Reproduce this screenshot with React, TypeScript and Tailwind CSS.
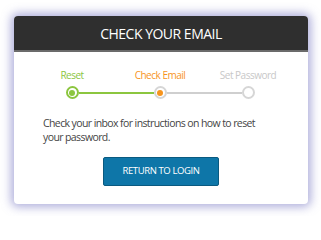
const steps = [
  { label: "Reset", text: "text-[#8cc63f]", ring: "border-[#8cc63f]", dot: "bg-[#8cc63f]", left: "bg-transparent", right: "bg-[#8cc63f]" },
  { label: "Check Email", text: "text-[#f7941d]", ring: "border-[#d6d6d6]", dot: "bg-[#f7941d]", left: "bg-[#8cc63f]", right: "bg-[#cfcfcf]" },
  { label: "Set Password", text: "text-[#c8c8c8]", ring: "border-[#d6d6d6]", dot: "", left: "bg-[#cfcfcf]", right: "bg-transparent" },
];

export default function App() {
  return (
    <div
      className="w-[321px] h-[216px] bg-white pt-4 pl-[14px]"
      style={{ fontFamily: '"Open Sans", sans-serif' }}
    >
      <div className="w-[294px] h-[188px] bg-white rounded-[4px] overflow-hidden shadow-[0_0_10px_3px_rgba(110,110,190,0.55)]">
        {/* header */}
        <div className="h-9 bg-[#2f2f2f] border-b-2 border-[#6b6b6b] flex items-center justify-center">
          <h1 className="text-white text-[14px] tracking-[-0.5px]">CHECK YOUR EMAIL</h1>
        </div>

        {/* steps */}
        <div className="mt-[17px] ml-[14px] grid grid-cols-[88px_88px_88px]">
          {steps.map((s) => (
            <div key={s.label} className="flex flex-col">
              <div className={`text-center text-[10px] leading-[12px] tracking-[-0.5px] whitespace-nowrap ${s.text}`}>
                {s.label}
              </div>
              <div className="mt-[5px] flex items-center h-[13px]">
                <div className={`flex-1 h-[2px] ${s.left}`} />
                <div className={`w-[13px] h-[13px] rounded-full border-2 bg-white flex items-center justify-center ${s.ring}`}>
                  {s.dot && <div className={`w-[6px] h-[6px] rounded-full ${s.dot}`} />}
                </div>
                <div className={`flex-1 h-[2px] ${s.right}`} />
              </div>
            </div>
          ))}
        </div>

        <p className="mt-[17px] pl-[29px] pr-[38px] text-[10.5px] leading-[14px] tracking-[-0.6px] text-[#444]">
          Check your inbox for instructions on how to reset your password.
        </p>

        <div className="flex justify-center mt-[13px]">
          <button className="w-[116px] h-[29px] bg-[#0e76a8] border border-[#0a5a80] rounded-[2px] text-white text-[9.5px] tracking-[-0.4px] font-medium">
            RETURN TO LOGIN
          </button>
        </div>
      </div>
    </div>
  );
}
